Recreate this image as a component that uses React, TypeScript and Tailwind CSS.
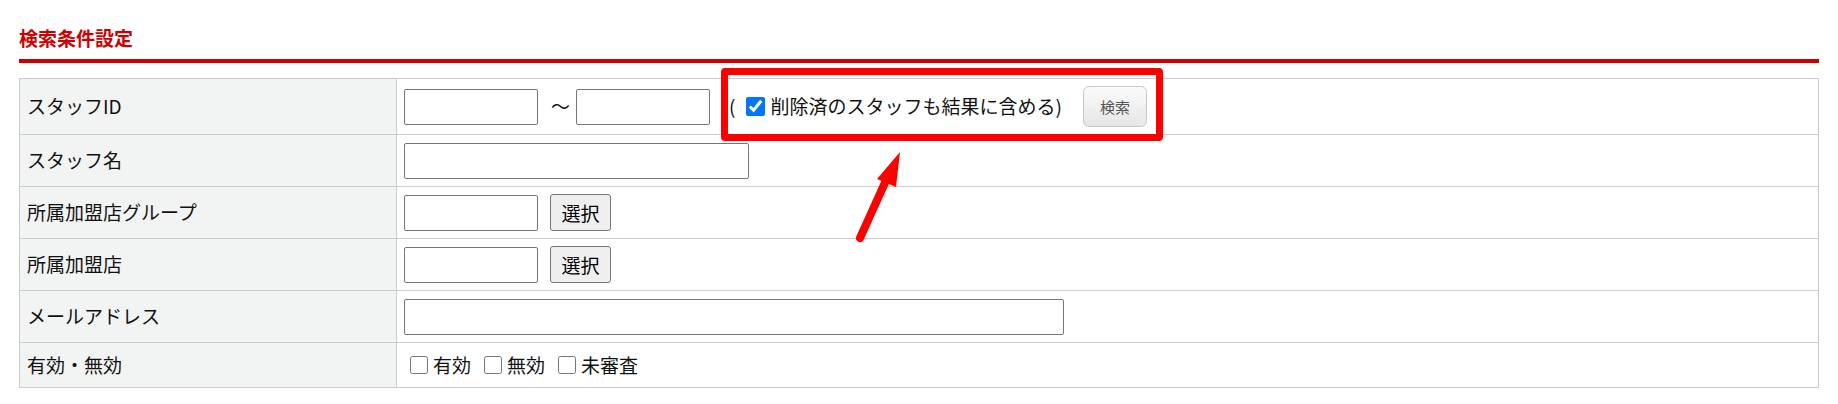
const font = "font-['Noto_Sans_CJK_JP','Noto_Sans',sans-serif]";

function TextInput({ w }: { w: string }) {
  return (
    <input
      type="text"
      className={`${w} h-[36px] border border-[#767676] rounded-[2px] bg-white px-1 outline-none`}
    />
  );
}

function SelectButton() {
  return (
    <button className="ml-[12px] w-[61px] h-[37px] border border-[#767676] rounded-[3px] bg-[#efefef] text-[19px] leading-none text-black">
      選択
    </button>
  );
}

function Row({
  label,
  h,
  children,
}: {
  label: string;
  h: string;
  children: React.ReactNode;
}) {
  return (
    <tr className={h}>
      <th className="w-[377px] bg-[#f2f3f3] border border-[#cccccc] pl-[7px] text-left font-normal align-middle">
        {label}
      </th>
      <td className="border border-[#cccccc] pl-[7px] align-middle">
        <div className="flex items-center">{children}</div>
      </td>
    </tr>
  );
}

function Check({ label, checked }: { label: string; checked?: boolean }) {
  return (
    <label className="flex items-center mr-[7px]">
      <input
        type="checkbox"
        defaultChecked={checked}
        className="w-[18px] h-[18px] ml-[6px] mr-[5px] accent-[#0075ff]"
      />
      <span>{label}</span>
    </label>
  );
}

export default function App() {
  return (
    <div className={`relative w-[1838px] h-[404px] bg-white text-[19px] text-[#111] ${font}`}>
      <div className="pl-[19px] pt-[24px] w-[1819px]">
        {/* 見出し */}
        <h2 className="text-[19px] leading-[28px] font-bold text-[#cc0000]">検索条件設定</h2>
        <div className="mt-[7px] h-[4px] bg-[#cc0000]" />

        <table className="mt-[15px] w-[1800px] border-collapse">
          <tbody>
            <Row label="スタッフID" h="h-[56px]">
              <TextInput w="w-[134px]" />
              <span className="ml-[13px] mr-[6px]">〜</span>
              <TextInput w="w-[134px]" />
              <span className="ml-[19px]">(</span>
              <input
                type="checkbox"
                defaultChecked
                className="w-[19px] h-[19px] ml-[11px] mr-[5px] accent-[#0075ff]"
              />
              <span>削除済のスタッフも結果に含める)</span>
              <button className="ml-[21px] w-[64px] h-[41px] rounded-[6px] border border-[#c8c8c8] bg-gradient-to-b from-[#fbfbfb] to-[#e6e6e6] text-[15px] leading-none text-[#555]">
                検索
              </button>
            </Row>
            <Row label="スタッフ名" h="h-[52px]">
              <TextInput w="w-[345px]" />
            </Row>
            <Row label="所属加盟店グループ" h="h-[52px]">
              <TextInput w="w-[134px]" />
              <SelectButton />
            </Row>
            <Row label="所属加盟店" h="h-[52px]">
              <TextInput w="w-[134px]" />
              <SelectButton />
            </Row>
            <Row label="メールアドレス" h="h-[52px]">
              <TextInput w="w-[660px]" />
            </Row>
            <Row label="有効・無効" h="h-[45px]">
              <Check label="有効" />
              <Check label="無効" />
              <Check label="未審査" />
            </Row>
          </tbody>
        </table>
      </div>

      {/* 注釈: 赤枠と矢印 */}
      <div className="absolute left-[721px] top-[68px] w-[442px] h-[73px] border-[7px] border-[#ff0000] rounded-[4px] pointer-events-none" />
      <svg
        className="absolute left-0 top-0 pointer-events-none"
        width="1838"
        height="404"
        viewBox="0 0 1838 404"
      >
        <line x1="860" y1="238" x2="888" y2="176" stroke="#ff0000" strokeWidth="8" strokeLinecap="round" />
        <polygon points="900,152 877,179 896,187" fill="#ff0000" />
      </svg>
    </div>
  );
}
